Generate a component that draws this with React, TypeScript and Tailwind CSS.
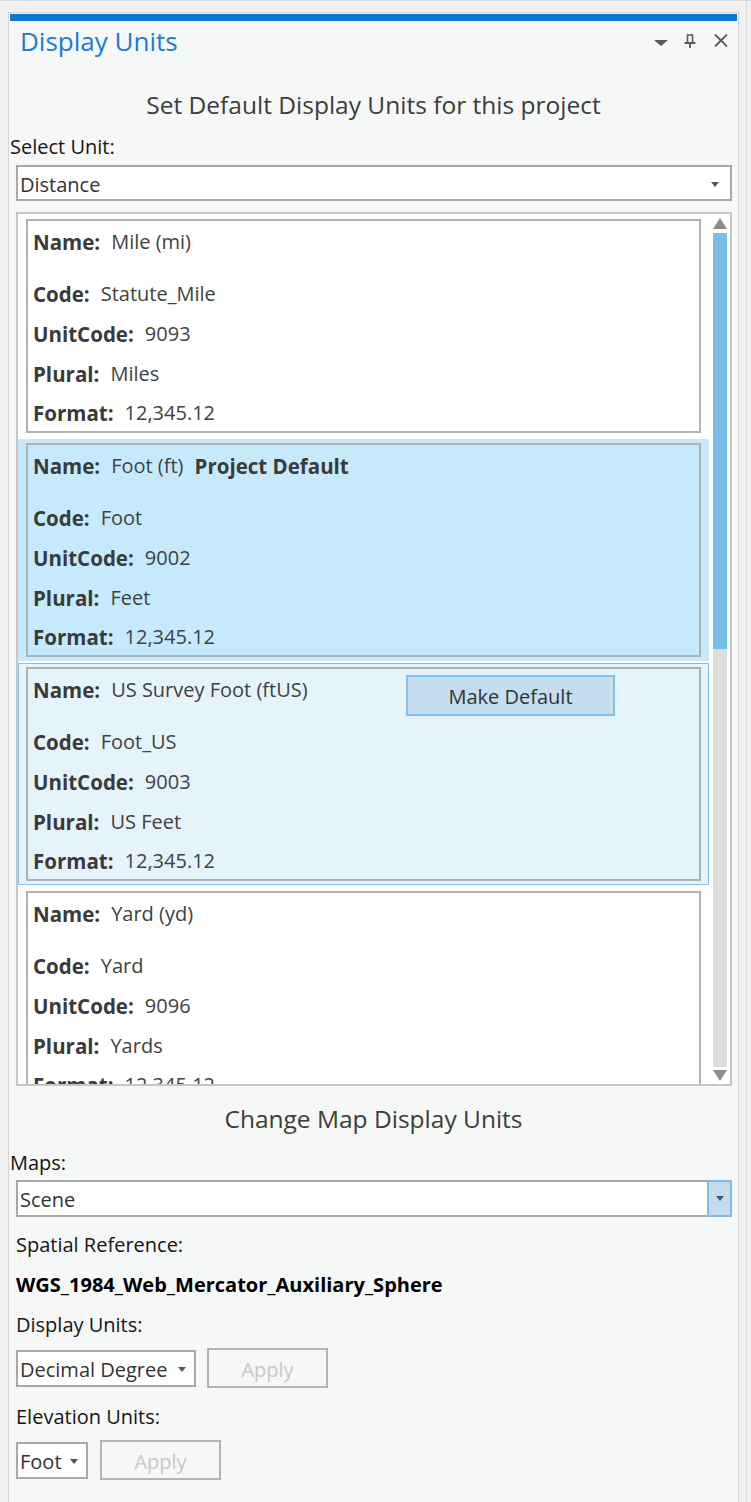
import React from "react"

type Unit = {
    name: string
    code: string
    unitCode: string
    plural: string
    format: string
    state: "normal" | "default" | "hover"
}

const units: Unit[] = [
    { name: "Mile (mi)", code: "Statute_Mile", unitCode: "9093", plural: "Miles", format: "12,345.12", state: "normal" },
    { name: "Foot (ft)", code: "Foot", unitCode: "9002", plural: "Feet", format: "12,345.12", state: "default" },
    { name: "US Survey Foot (ftUS)", code: "Foot_US", unitCode: "9003", plural: "US Feet", format: "12,345.12", state: "hover" },
    { name: "Yard (yd)", code: "Yard", unitCode: "9096", plural: "Yards", format: "12,345.12", state: "normal" },
]

const Caret = () => (
    <span className="w-0 h-0 border-l-[4px] border-r-[4px] border-t-[5px] border-l-transparent border-r-transparent border-t-[#555]" />
)

const Field = ({ label, value, h = "h-[40px]" }: { label: string; value: string; h?: string }) => (
    <div className={`flex items-center pt-[2px] ${h}`}>
        <span className="font-bold text-[20.5px] text-[#3a3a3a]">{label}:</span>
        <span className="ml-[11px] text-[#414141]">{value}</span>
    </div>
)

const UnitCard = ({ unit }: { unit: Unit }) => {
    const wrap =
        unit.state === "default"
            ? "border-[#c6e9fc] bg-[#c6e9fc]"
            : unit.state === "hover"
            ? "border-[#7fc2ea] bg-[#e5f3fb]"
            : "border-transparent"
    const box = unit.state === "default" ? "bg-[#c6eafc] border-[#a9b4ba]" : unit.state === "hover" ? "bg-[#e5f3fb] border-[#b0b0b0]" : "bg-white border-[#b3b3b3]"

    return (
        <div className={`border px-[7px] py-[3px] mb-[2px] ${wrap}`}>
            <div className={`h-[214px] border-2 pl-[5px] ${box}`}>
                <div className="flex h-[40px]">
                    <div className="w-[373px] flex items-center pt-[2px] h-[40px]">
                        <span className="font-bold text-[20.5px] text-[#3a3a3a]">Name:</span>
                        <span className="ml-[11px] text-[#414141]">{unit.name}</span>
                        {unit.state === "default" && <span className="ml-[11px] font-bold text-[20.5px] text-[#3a3a3a]">Project Default</span>}
                    </div>
                    {unit.state === "hover" && (
                        <button className="mt-[6px] w-[209px] h-[41px] shrink-0 border-2 border-[#80c0ea] bg-[#c6dcef] text-[#333] flex items-center justify-center pt-[2px]">
                            Make Default
                        </button>
                    )}
                </div>
                <div className="mt-[12px]">
                    <Field label="Code" value={unit.code} />
                    <Field label="UnitCode" value={unit.unitCode} />
                    <Field label="Plural" value={unit.plural} />
                    <Field label="Format" value={unit.format} h="h-[38px]" />
                </div>
            </div>
        </div>
    )
}

const Dropdown = ({ value, w }: { value: string; w: string }) => (
    <div className={`${w} h-[37px] border-2 border-[#a8a8a8] bg-white flex items-center pt-[3px] pl-[2px] pr-[8px] shrink-0`}>
        <span className="flex-1 text-[#333]">{value}</span>
        <Caret />
    </div>
)

const ApplyButton = () => (
    <button className="w-[121px] h-[40px] border-2 border-[#b4b4b4] text-[#c8c8c8] flex items-center justify-center pt-[3px] shrink-0">Apply</button>
)

const App = () => {
    return (
        <div className="w-[751px] h-[1502px] bg-[#f0f0f0] border-t border-[#d6d6d6] flex overflow-hidden font-['Open_Sans','Noto_Sans',sans-serif] text-[20px] leading-none">
            <div className="w-[8px] shrink-0" />

            {/* PANEL */}
            <div className="w-[731px] mt-[11px] border-l border-r border-t border-[#d4d4d4] bg-[#f6f7f7] flex flex-col shrink-0">
                <div className="h-[7px] bg-[#0a78d2] mx-[1px] mt-[1px]" />

                {/* header */}
                <div className="h-[42px] flex items-center pl-[11px] pr-[10px]">
                    <span className="text-[26px] text-[#1a7cd3] flex-1 -mt-[2px]">Display Units</span>
                    <div className="flex items-center text-[#555] mb-[3px]">
                        <span className="w-0 h-0 border-l-[7px] border-r-[7px] border-t-[6px] border-l-transparent border-r-transparent border-t-[#5a5a5a] mt-[4px]" />
                        <svg className="ml-[16px]" width="12" height="14" viewBox="0 0 12 14" fill="none" stroke="#5a5a5a" strokeWidth="1.6">
                            <path d="M3.5 0.5 V8.5 M8.5 0.5 V8.5 M3 1 H9" />
                            <path d="M0.5 9 H11.5" strokeWidth="2" />
                            <path d="M6 9.5 V14" strokeWidth="1.8" />
                        </svg>
                        <svg className="ml-[18px]" width="14" height="13" viewBox="0 0 14 13" stroke="#5a5a5a" strokeWidth="1.8">
                            <path d="M1 0.5 L13 12.5 M13 0.5 L1 12.5" />
                        </svg>
                    </div>
                </div>

                <div className="mt-[22px] h-[40px] flex items-center justify-center text-[24.5px] text-[#3c3c3c]">
                    Set Default Display Units for this project
                </div>

                <div className="mt-[4px] h-[36px] flex items-center pl-[1px] text-[#151515]">Select Unit:</div>

                <div className="ml-[7px] w-[716px] h-[36px] border-2 border-[#a8a8a8] bg-white flex items-center pt-[3px] pl-[2px] pr-[11px]">
                    <span className="flex-1 text-[#333]">Distance</span>
                    <Caret />
                </div>

                {/* unit list */}
                <div className="ml-[7px] mt-[11px] w-[716px] h-[874px] border-2 border-[#c6c6c6] bg-white flex overflow-hidden">
                    <div className="w-[691px] pt-[1px] overflow-hidden">
                        {units.map(u => (
                            <UnitCard key={u.code} unit={u} />
                        ))}
                    </div>
                    <div className="ml-[4px] w-[14px] flex flex-col">
                        <div className="h-[19px] flex items-center justify-center">
                            <span className="w-0 h-0 border-l-[7px] border-r-[7px] border-b-[11px] border-l-transparent border-r-transparent border-b-[#8c8c8c]" />
                        </div>
                        <div className="h-[416px] bg-[#7abde8]" />
                        <div className="h-[418px] bg-[#dcdcdc]" />
                        <div className="flex-1 flex items-center justify-center">
                            <span className="w-0 h-0 border-l-[7px] border-r-[7px] border-t-[11px] border-l-transparent border-r-transparent border-t-[#8c8c8c]" />
                        </div>
                    </div>
                </div>

                <div className="h-[66px] flex items-center justify-center text-[24.5px] text-[#3c3c3c]">Change Map Display Units</div>

                <div className="h-[22px] flex items-center pl-[1px] text-[#151515]">Maps:</div>

                <div className="ml-[7px] mt-[6px] w-[716px] h-[37px] border-2 border-[#a8a8a8] bg-white flex">
                    <span className="flex-1 flex items-center pt-[3px] pl-[2px] text-[#333]">Scene</span>
                    <div className="w-[25px] -my-[2px] -mr-[2px] border-2 border-[#80bde6] bg-[#c5dcef] flex items-center justify-center">
                        <Caret />
                    </div>
                </div>

                <div className="mt-[6px] pl-[7px] flex flex-col">
                    <div className="h-[40px] flex items-center pt-[3px] text-[#151515]">Spatial Reference:</div>
                    <div className="h-[40px] flex items-center pt-[3px] font-bold text-black">WGS_1984_Web_Mercator_Auxiliary_Sphere</div>
                    <div className="h-[40px] flex items-center pt-[3px] text-[#151515]">Display Units:</div>
                    <div className="mt-[5px] h-[40px] flex items-center gap-[11px]">
                        <Dropdown value="Decimal Degree" w="w-[180px]" />
                        <ApplyButton />
                    </div>
                    <div className="mt-[8px] h-[40px] flex items-center pt-[2px] text-[#151515]">Elevation Units:</div>
                    <div className="mt-[4px] h-[40px] flex items-center gap-[12px]">
                        <Dropdown value="Foot" w="w-[72px]" />
                        <ApplyButton />
                    </div>
                </div>
            </div>

            {/* right dock strip */}
            <div className="flex-1 flex">
                <div className="w-[7px]" />
                <div className="w-px bg-[#dadada]" />
            </div>
        </div>
    )
}

export default App
